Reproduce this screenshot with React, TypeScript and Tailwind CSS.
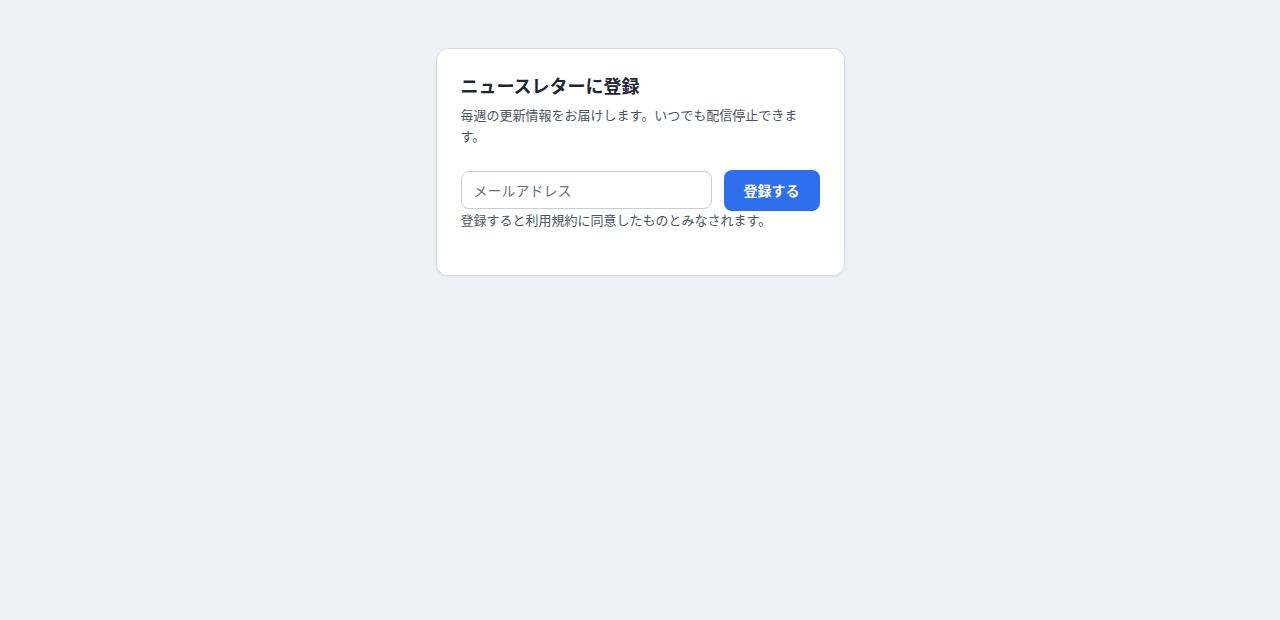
export default function App() {
  return (
    <div
      className="min-h-[620px] w-full bg-[#eef1f5] pt-12"
      style={{ fontFamily: '"Inter", "Noto Sans CJK JP", sans-serif' }}
    >
      <div className="mx-auto w-[409px] rounded-xl border border-[#d9dde3] bg-white px-6 pt-6 pb-[46px] shadow-[0_1px_3px_rgba(15,23,42,0.06)]">
        <h1 className="text-[18px] font-bold leading-7 text-[#1f2733]">ニュースレターに登録</h1>
        <p className="mt-1 text-[13px] leading-[1.6] text-[#4b5563]">
          毎週の更新情報をお届けします。いつでも配信停止できます。
        </p>

        <form className="mt-[23px]" onSubmit={(e) => e.preventDefault()}>
          <div className="flex items-center gap-3">
            <input
              type="email"
              placeholder="メールアドレス"
              className="h-[38px] flex-1 rounded-lg border border-[#c9ced6] px-3 text-[14px] text-[#1f2733] outline-none placeholder:text-[#6b7280]"
            />
            <button
              type="submit"
              className="h-[41px] w-24 rounded-lg bg-[#2f6fed] text-[14px] font-semibold text-white"
            >
              登録する
            </button>
          </div>
          <p className="text-[13px] leading-[18px] text-[#4b5563]">
            登録すると利用規約に同意したものとみなされます。
          </p>
        </form>
      </div>
    </div>
  );
}
